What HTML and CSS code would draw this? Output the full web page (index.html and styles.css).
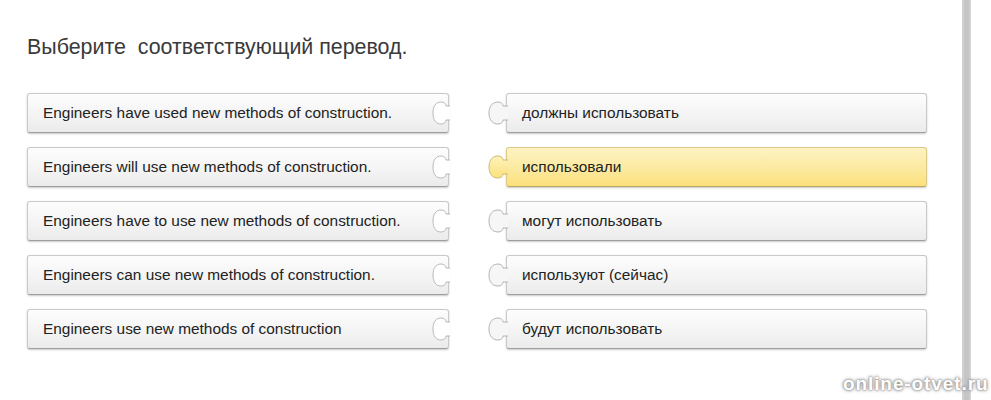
FILE: index.html
```html
<!DOCTYPE html>
<html lang="ru">
<head>
<meta charset="utf-8">
<title>Соответствие</title>
<link rel="stylesheet" href="styles.css">
</head>
<body>
<div class="page">
  <main class="panel">
    <h1 class="question">Выберите&nbsp; соответствующий перевод.</h1>
    <div class="board">
      <div class="piece piece-left"><span>Engineers have used new methods of construction.</span><svg class="socket" viewBox="0 0 20 40" width="20" height="40"><path d="M21 13 L17 13 C17 11 15.5 9 12 9 C7 9 4 13 4 20 C4 27 7 31 12 31 C15.5 31 17 29 17 27 L21 27"/></svg></div>
      <div class="piece piece-right"><svg class="knob" viewBox="0 0 20 40" width="20" height="40"><path d="M21 13 L16 13 C16 11 14.5 9 11 9 C5.5 9 2 13 2 20 C2 27 5.5 31 11 31 C14.5 31 16 29 16 27 L21 27"/></svg><span>должны использовать</span></div>

      <div class="piece piece-left"><span>Engineers will use new methods of construction.</span><svg class="socket" viewBox="0 0 20 40" width="20" height="40"><path d="M21 13 L17 13 C17 11 15.5 9 12 9 C7 9 4 13 4 20 C4 27 7 31 12 31 C15.5 31 17 29 17 27 L21 27"/></svg></div>
      <div class="piece piece-right is-selected"><svg class="knob" viewBox="0 0 20 40" width="20" height="40"><defs><linearGradient id="yk" x1="0" y1="0" x2="0" y2="1"><stop offset="0" stop-color="#fdf2bd"/><stop offset="1" stop-color="#fbe27c"/></linearGradient></defs><path d="M21 13 L16 13 C16 11 14.5 9 11 9 C5.5 9 2 13 2 20 C2 27 5.5 31 11 31 C14.5 31 16 29 16 27 L21 27"/></svg><span>использовали</span></div>

      <div class="piece piece-left"><span>Engineers have to use new methods of construction.</span><svg class="socket" viewBox="0 0 20 40" width="20" height="40"><path d="M21 13 L17 13 C17 11 15.5 9 12 9 C7 9 4 13 4 20 C4 27 7 31 12 31 C15.5 31 17 29 17 27 L21 27"/></svg></div>
      <div class="piece piece-right"><svg class="knob" viewBox="0 0 20 40" width="20" height="40"><path d="M21 13 L16 13 C16 11 14.5 9 11 9 C5.5 9 2 13 2 20 C2 27 5.5 31 11 31 C14.5 31 16 29 16 27 L21 27"/></svg><span>могут использовать</span></div>

      <div class="piece piece-left"><span>Engineers can use new methods of construction.</span><svg class="socket" viewBox="0 0 20 40" width="20" height="40"><path d="M21 13 L17 13 C17 11 15.5 9 12 9 C7 9 4 13 4 20 C4 27 7 31 12 31 C15.5 31 17 29 17 27 L21 27"/></svg></div>
      <div class="piece piece-right"><svg class="knob" viewBox="0 0 20 40" width="20" height="40"><path d="M21 13 L16 13 C16 11 14.5 9 11 9 C5.5 9 2 13 2 20 C2 27 5.5 31 11 31 C14.5 31 16 29 16 27 L21 27"/></svg><span>используют (сейчас)</span></div>

      <div class="piece piece-left"><span>Engineers use new methods of construction</span><svg class="socket" viewBox="0 0 20 40" width="20" height="40"><path d="M21 13 L17 13 C17 11 15.5 9 12 9 C7 9 4 13 4 20 C4 27 7 31 12 31 C15.5 31 17 29 17 27 L21 27"/></svg></div>
      <div class="piece piece-right"><svg class="knob" viewBox="0 0 20 40" width="20" height="40"><path d="M21 13 L16 13 C16 11 14.5 9 11 9 C5.5 9 2 13 2 20 C2 27 5.5 31 11 31 C14.5 31 16 29 16 27 L21 27"/></svg><span>будут использовать</span></div>
    </div>
  </main>
  <div class="rail"></div>
  <div class="margin"></div>
  <div class="credit">online-otvet.ru</div>
</div>
</body>
</html>
```

FILE: styles.css
```css
html, body {
  margin: 0;
  padding: 0;
  background: #ffffff;
}

body {
  font-family: "Liberation Sans", Arial, sans-serif;
  color: #222222;
}

.page {
  position: relative;
  display: flex;
  width: 991px;
  height: 400px;
  overflow: hidden;
}

.panel {
  width: 962px;
  flex: none;
  padding: 34px 0 0 27px;
  box-sizing: border-box;
  border-top-right-radius: 6px;
}

.rail {
  width: 9px;
  flex: none;
  background: linear-gradient(to right, #d4d4d4, #c4c4c4 40%, #c8c8c8 80%, #dcdcdc);
}

.margin {
  flex: 1;
  background: #ffffff;
}

.question {
  margin: 0;
  font-size: 21.4px;
  line-height: 26px;
  font-weight: normal;
  color: #3a3a3a;
}

.board {
  margin-top: 33px;
  display: grid;
  grid-template-columns: 422px 421px;
  column-gap: 57px;
  row-gap: 14px;
}

.piece {
  position: relative;
  height: 40px;
  box-sizing: border-box;
  display: flex;
  align-items: center;
  border: 1px solid #c9c9c9;
  border-bottom-color: #9e9e9e;
  border-radius: 3px;
  background: linear-gradient(to bottom, #fdfdfd, #f3f3f3 60%, #ebebeb);
  box-shadow: 0 1px 2px rgba(0, 0, 0, 0.22);
  font-size: 15.4px;
  color: #222222;
  white-space: nowrap;
}

.piece-left {
  padding-left: 15px;
}

.piece-right {
  padding-left: 15px;
}

.piece-right.is-selected {
  border-color: #dccb86;
  border-bottom-color: #b9a862;
  background: linear-gradient(to bottom, #fdf3c2, #fce9a0 55%, #fbe07a);
}

/* socket cut into the right end of a left-hand piece */
.socket {
  position: absolute;
  right: -1px;
  top: -1px;
  overflow: visible;
}

.socket path {
  fill: #ffffff;
  stroke: #b9b9b9;
  stroke-width: 1;
}

/* tab sticking out of the left edge of a right-hand piece */
.knob {
  position: absolute;
  left: -20px;
  top: -1px;
  overflow: visible;
}

.knob path {
  fill: #f6f6f6;
  stroke: #b4b4b4;
  stroke-width: 1;
}

.is-selected .knob path {
  fill: url(#yk);
  stroke: #cdbb72;
}

.credit {
  position: absolute;
  left: 843px;
  top: 373px;
  white-space: nowrap;
  font-family: "Liberation Sans", Arial, sans-serif;
  font-weight: bold;
  font-size: 19px;
  letter-spacing: 0.9px;
  color: #ffffff;
  text-shadow: 0 0 2px #8a8a8a, 0 0 3px #9a9a9a, 0 0 4px #aaaaaa;
}
```
